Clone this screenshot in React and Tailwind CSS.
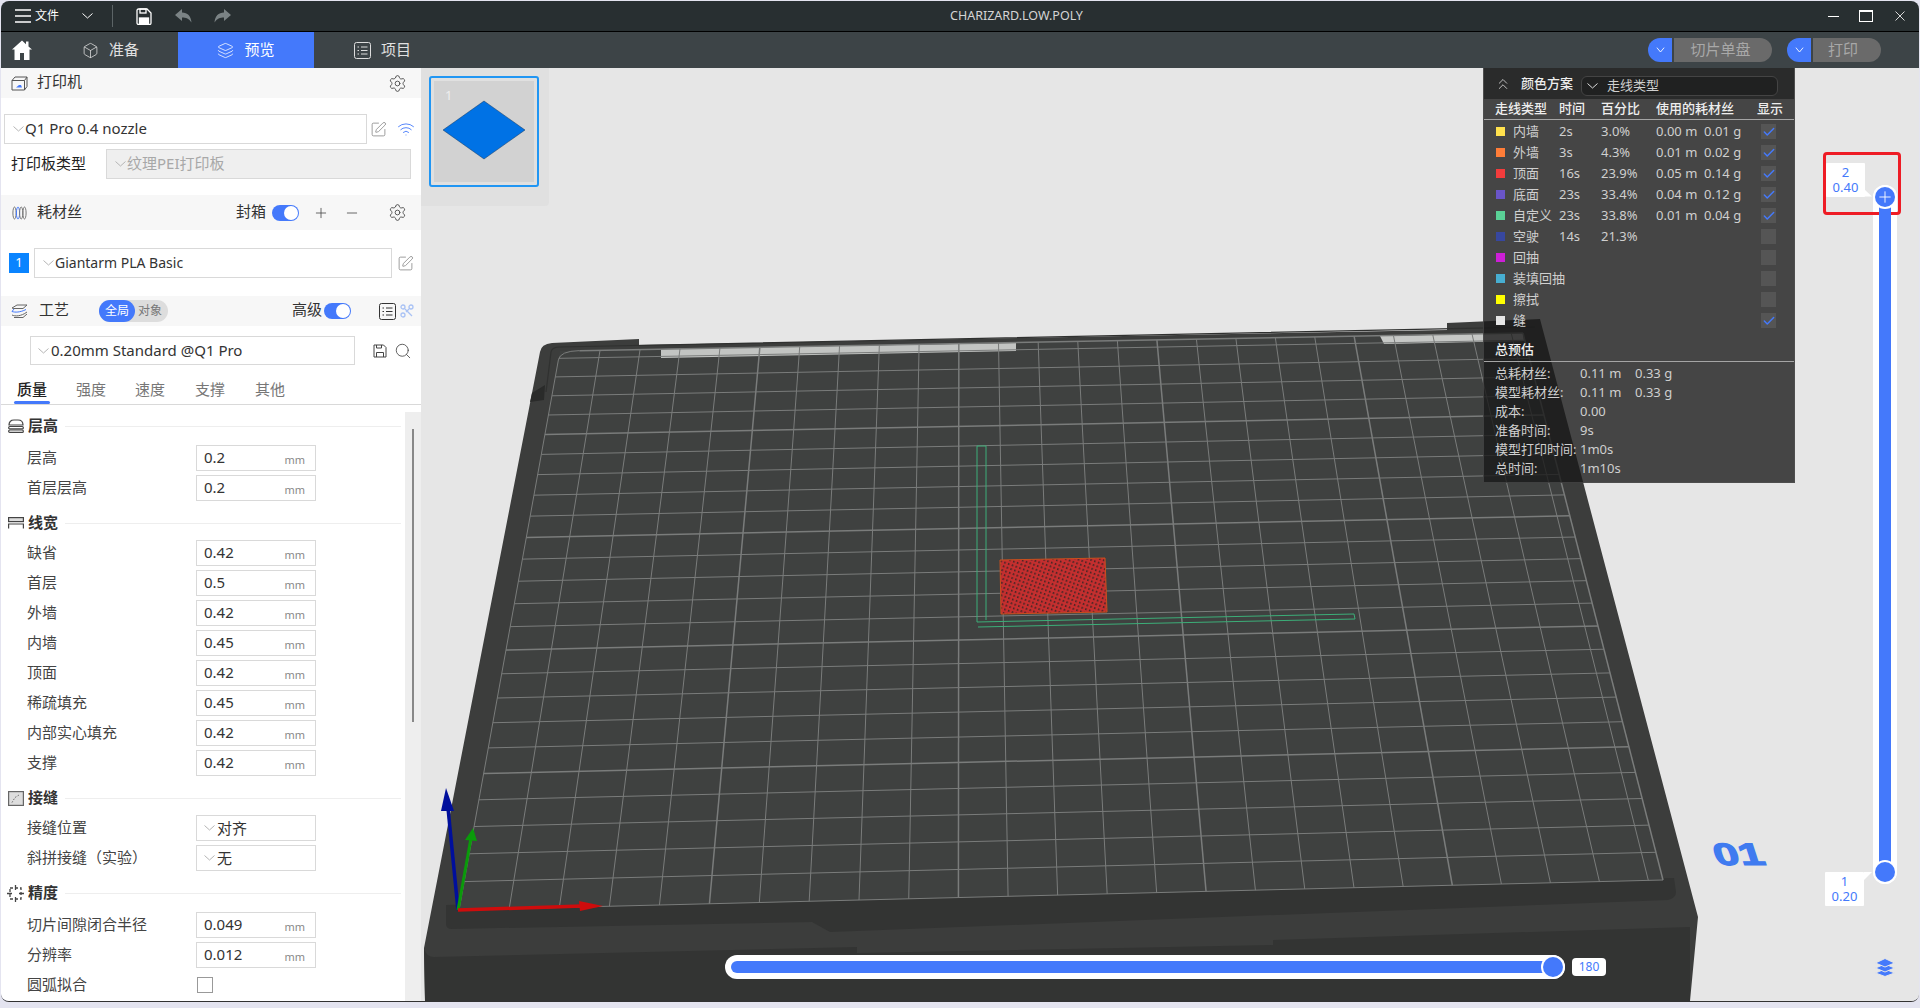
import React from 'react';
import { Check, Plus, Minus, Search, SquarePen, Wifi, Settings, Box, Layers, ChevronsUp } from 'lucide-react';

const BLUE = '#4479fb';

// --- small icons that the icon packages don't have ---
const Chevron = ({ className = '', color = '#b5b5b5' }) => (
  <svg width="11" height="6" viewBox="0 0 11 6" className={`shrink-0 ${className}`}>
    <polyline points="0.5,0.5 5.5,5 10.5,0.5" fill="none" stroke={color} strokeWidth="1" />
  </svg>
);

const Toggle = () => (
  <div className="w-[27px] h-[16px] rounded-full bg-[#4479fb] flex items-center justify-end pr-[1px]">
    <div className="w-[14px] h-[14px] rounded-full bg-white" />
  </div>
);

const Gear = () => <Settings size={19} strokeWidth={1.1} color="#444" />;
const Edit = () => <SquarePen size={17} strokeWidth={1} color="#777" />;

const ListIcon = ({ size = 17, color = '#333' }) => (
  <svg width={size} height={size} viewBox="0 0 17 17" fill="none" stroke={color} strokeWidth="1">
    <rect x="0.5" y="0.5" width="16" height="16" rx="2" />
    <path d="M3.5 5h1.5M3.5 8.5h1.5M3.5 12h1.5M7 5h6.5M7 8.5h6.5M7 12h6.5" />
  </svg>
);

const Select = ({ text, className = '', textClass = '-mt-[2px] text-[#333] text-[15px]', chevronMargin = 'ml-[8px]', gap = 'ml-[1px]', bg = 'bg-white' }) => (
  <div className={`flex items-center border border-[#d9d9d9] ${bg} ${className}`}>
    <Chevron className={chevronMargin} />
    <span className={`${gap} whitespace-nowrap ${textClass}`}>{text}</span>
  </div>
);

const PanelHeader = ({ icon, title, height = 'h-[30px]', titleClass = 'ml-[9px]', children }) => (
  <div className={`flex items-center bg-[#f7f7f7] ${height}`}>
    <div className="ml-[10px] w-[17px] flex justify-center">{icon}</div>
    <span className={`${titleClass} -mt-[3px] text-[15px] text-[#333] whitespace-nowrap`}>{title}</span>
    {children}
  </div>
);

const SectionTitle = ({ icon, title, className = 'mt-[5px]' }) => (
  <div className={`flex items-center h-[30px] ${className}`}>
    <div className="ml-[6px] w-[17px] flex justify-center">{icon}</div>
    <span className="ml-[4px] -mt-[2px] text-[15px] font-bold text-[#333]">{title}</span>
    <div className="ml-[7px] w-[336px] h-px bg-[#eeeeee]" />
  </div>
);

const NumRow = ({ label, value }) => (
  <div className="flex items-center h-[30px]">
    <span className="ml-[26px] w-[169px] -mt-[2px] text-[15px] text-[#444] whitespace-nowrap">{label}</span>
    <div className="w-[120px] h-[26px] border border-[#d9d9d9] flex items-center pl-[7px] pr-[10px] justify-between">
      <span className="-mt-[2px] text-[15px] text-[#333]">{value}</span>
      <span className="text-[11px] text-[#888] mt-[5px]">mm</span>
    </div>
  </div>
);

const SelectRow = ({ label, value }) => (
  <div className="flex items-center h-[30px]">
    <span className="ml-[26px] w-[169px] -mt-[2px] text-[15px] text-[#444] whitespace-nowrap">{label}</span>
    <Select text={value} className="w-[120px] h-[26px]" chevronMargin="ml-[7px]" gap="ml-[2px]" textClass="text-[#333] text-[15px]" />
  </div>
);

const LayerHeightIcon = () => (
  <svg width="16" height="14" viewBox="0 0 16 14" fill="none" stroke="#444" strokeWidth="1.2">
    <path d="M1 6c0-3 2-5 5-5h4c3 0 5 2 5 5z" />
    <rect x="0.7" y="7.5" width="14.6" height="2.4" rx="1" />
    <rect x="0.7" y="11" width="14.6" height="2.4" rx="1" />
  </svg>
);

const LineWidthIcon = () => (
  <svg width="16" height="12" viewBox="0 0 16 12" fill="none" stroke="#444" strokeWidth="1.2">
    <rect x="0.6" y="0.6" width="14.8" height="4" fill="#ddd" />
    <path d="M0.6 11.5V7h14.8v4.5" />
  </svg>
);

const SeamIcon = () => (
  <svg width="16" height="15" viewBox="0 0 16 15">
    <rect x="0.6" y="0.6" width="14.8" height="13.8" fill="#ddd" stroke="#666" strokeWidth="1.2" />
    <path d="M4 11.5 7 6.5 11 4" fill="none" stroke="#666" strokeDasharray="1.4 1.6" />
  </svg>
);

const PrecisionIcon = () => (
  <svg width="17" height="17" viewBox="0 0 17 17" fill="none" stroke="#444" strokeWidth="1.3">
    <rect x="3" y="3" width="11" height="11" strokeDasharray="3 2" />
    <path d="M8.5 0v5M8.5 12v5M0 8.5h5M12 8.5h5" />
  </svg>
);

const PrinterIcon = () => (
  <svg width="17" height="15" viewBox="0 0 17 15" fill="none" stroke="#555" strokeWidth="1">
    <path d="M1 4.5h12.5V14H1zM1 4.5 4 1h12v9.5L13.5 14M13.5 4.5 16 1" />
    <path d="M5 11.5h6l-1-2.5H8z" fill="#4479fb" stroke="none" />
  </svg>
);

const FilamentIcon = () => (
  <svg width="15" height="14" viewBox="0 0 15 14" fill="none" stroke="#777" strokeWidth="1">
    <ellipse cx="2.5" cy="7" rx="1.6" ry="6" />
    <ellipse cx="6" cy="7" rx="1.6" ry="6" stroke="#4479fb" />
    <ellipse cx="9.2" cy="7" rx="1.6" ry="6" />
    <ellipse cx="12.5" cy="7" rx="1.6" ry="6" />
  </svg>
);

const ProcessIcon = () => (
  <svg width="17" height="14" viewBox="0 0 17 14" fill="none" stroke="#666" strokeWidth="1">
    <path d="M1 4 6 1h10l-4 3.5H3z" />
    <path d="M1 7.5 3 5M1 7.5c3 1 8 1 14-2" stroke="#4479fb" />
    <path d="M1 11c3 1.5 9 1.500 15-3M3 13.500h9l4-3.500" />
  </svg>
);

const FloppyIcon = () => (
  <svg width="16" height="17" viewBox="0 0 16 17" fill="none" stroke="#fff" strokeWidth="1.3">
    <path d="M1 2.500A1.500 1.500 0 0 1 2.500 1H11l4 4v10a1.500 1.500 0 0 1-1.500 1.500h-11A1.500 1.500 0 0 1 1 15z" />
    <rect x="4" y="1" width="6" height="4" />
    <rect x="3.500" y="10" width="9" height="6.500" fill="#fff" />
  </svg>
);

const UndoIcon = ({ flip }) => (
  <svg width="17" height="14" viewBox="0 0 17 14" className={flip ? '-scale-x-100' : ''}>
    <path d="M7 0 0 6l7 6V8.500c4 0 7 1 9.500 5C16 7 12.500 3.500 7 3.500z" fill="#7b8385" />
  </svg>
);

const HomeIcon = () => (
  <svg width="20" height="20" viewBox="0 0 20 20" fill="#fff">
    <path d="M10 0.500 0 9.500h2.500V20H8v-7h4v7h5.500V9.500H20L16.500 6.500V1.500h-2.500v2.800z" />
  </svg>
);

const TabItem = ({ icon, label, className }) => (
  <div className={`flex items-center h-full ${className}`}>
    {icon}
    <span className="text-[15px] ml-[10px] -mt-[2px]">{label}</span>
  </div>
);

const SplitButton = ({ label, width, pad }) => (
  <div className="flex h-[24px]">
    <div className="w-[24px] rounded-l-full bg-[#4479fb] flex items-center justify-center">
      <Chevron color="#fff" className="scale-x-75" />
    </div>
    <div className={`ml-[2px] ${width} ${pad} rounded-r-full bg-[#6a6a6a] text-[#a8a8a8] text-[15px] flex items-center justify-center`}>
      <span className="-mt-[2px]">{label}</span>
    </div>
  </div>
);

// --- color scheme table ---
const LINE_TYPES = [
  { c: '#ffe14d', n: '内墙', t: '2s', p: '3.0%', m: '0.00 m', g: '0.01 g', on: true },
  { c: '#ff7d38', n: '外墙', t: '3s', p: '4.3%', m: '0.01 m', g: '0.02 g', on: true },
  { c: '#f23c3c', n: '顶面', t: '16s', p: '23.9%', m: '0.05 m', g: '0.14 g', on: true },
  { c: '#6a55c8', n: '底面', t: '23s', p: '33.4%', m: '0.04 m', g: '0.12 g', on: true },
  { c: '#5ad196', n: '自定义', t: '23s', p: '33.8%', m: '0.01 m', g: '0.04 g', on: true },
  { c: '#37479f', n: '空驶', t: '14s', p: '21.3%' },
  { c: '#cd1fd7', n: '回抽' },
  { c: '#47aed1', n: '装填回抽' },
  { c: '#ffff00', n: '擦拭' },
  { c: '#e6e6e6', n: '缝', on: true },
];

const SUMMARY = [
  ['总耗材丝:', '0.11 m', '0.33 g'],
  ['模型耗材丝:', '0.11 m', '0.33 g'],
  ['成本:', '0.00'],
  ['准备时间:', '9s'],
  ['模型打印时间:', '1m0s'],
  ['总时间:', '1m10s'],
];

const ColorPanel = () => (
  <div className="absolute left-[1062px] top-0 w-[312px] h-[415px] bg-[rgba(24,24,24,0.785)] text-[13px] text-[#cfcfcf] border-x border-b border-[#555]/60">
    <div className="h-[31px] bg-[#2a2b2b] flex items-center">
      <ChevronsUp size={18} strokeWidth={1.1} color="#ddd" className="ml-[10px]" />
      <span className="ml-[9px] w-[60px] text-[#eee] font-medium">颜色方案</span>
      <div className="w-[197px] h-[20px] mt-[5px] rounded-md bg-[#202121] border border-[#444] flex items-center">
        <Chevron color="#ddd" className="ml-[5px]" />
        <span className="ml-[9px]">走线类型</span>
      </div>
    </div>
    <div className="h-[21px] flex items-center text-[#eee] font-medium border-b border-[#a5a5a5]">
      <span className="ml-[11px] w-[64px]">走线类型</span>
      <span className="w-[42px]">时间</span>
      <span className="w-[55px]">百分比</span>
      <span className="w-[101px]">使用的耗材丝</span>
      <span>显示</span>
    </div>
    <div className="pt-px">
      {LINE_TYPES.map((r) => (
        <div key={r.n} className="h-[21px] flex items-center">
          <div className="ml-[12px] w-[9px] h-[9px] mr-[8px]" style={{ backgroundColor: r.c }} />
          <span className="w-[46px] whitespace-nowrap">{r.n}</span>
          <span className="w-[42px]">{r.t}</span>
          <span className="w-[55px]">{r.p}</span>
          <span className="w-[48px]">{r.m}</span>
          <span className="w-[57px]">{r.g}</span>
          <div className="w-[15px] h-[15px] bg-[#555] flex items-center justify-center">
            {r.on && <Check size={14} strokeWidth={2.5} color={BLUE} />}
          </div>
        </div>
      ))}
    </div>
    <div className="mt-[9px] h-[22px] flex items-center border-b border-[#a5a5a5] pl-[11px] pb-[2px] text-[#eee] font-medium">总预估</div>
    <div className="pt-[2px]">
      {SUMMARY.map((r) => (
        <div key={r[0]} className="h-[19px] flex items-center pl-[11px]">
          <span className="w-[85px] whitespace-nowrap">{r[0]}</span>
          <span className="w-[55px]">{r[1]}</span>
          <span>{r[2]}</span>
        </div>
      ))}
    </div>
  </div>
);

// --- print bed, drawn in window coordinates ---
const square = (u, v) => {
  const [x0, y0] = [459, 910];
  const [x1, y1] = [1663, 880];
  const [x2, y2] = [1523, 333];
  const [x3, y3] = [560, 351];
  const dx1 = x1 - x2, dx2 = x3 - x2, sx = x0 - x1 + x2 - x3;
  const dy1 = y1 - y2, dy2 = y3 - y2, sy = y0 - y1 + y2 - y3;
  const den = dx1 * dy2 - dx2 * dy1;
  const g = (sx * dy2 - dx2 * sy) / den;
  const h = (dx1 * sy - sx * dy1) / den;
  const w = g * u + h * v + 1;
  return [
    ((x1 - x0 + g * x1) * u + (x3 - x0 + h * x3) * v + x0) / w,
    ((y1 - y0 + g * y1) * u + (y3 - y0 + h * y3) * v + y0) / w,
  ];
};

const COLS = 24.3;
const ROWS = 24.4;
const LINE = '#7a7c7b';

const gridLines = () => {
  const out = [];
  for (let i = 0; i <= Math.ceil(COLS); i++) {
    const u = Math.min(i, COLS) / COLS;
    const a = square(u, 0);
    const b = square(u, i === 0 ? 0.98 : 1);
    out.push(<line key={`v${i}`} x1={a[0]} y1={a[1]} x2={b[0]} y2={b[1]} stroke={LINE} strokeWidth={i % 5 === 0 && i > 0 ? 1.5 : 1} />);
  }
  for (let j = 0; j <= Math.ceil(ROWS); j++) {
    const v = Math.min(j, ROWS) / ROWS;
    const a = square(j === Math.ceil(ROWS) ? 0.02 : 0, v);
    const b = square(1, v);
    out.push(<line key={`h${j}`} x1={a[0]} y1={a[1]} x2={b[0]} y2={b[1]} stroke={LINE} strokeWidth={j % 5 === 0 && j > 0 ? 1.5 : 1} />);
  }
  return out;
};

const BedDrawing = () => {
  const tl = square(0, 1);
  const tlA = square(0, 0.98);
  const tlB = square(0.02, 1);
  const quad = [square(0, 0), square(1, 0), square(1, 1), square(0, 1)].map((p) => p.join(',')).join(' ');
  return (
    <svg className="absolute inset-0 w-[1498px] h-[933px]" viewBox="421 68 1498 933">
      <defs>
        <pattern id="hatch" width="4" height="4" patternUnits="userSpaceOnUse" patternTransform="rotate(20)">
          <rect width="4" height="4" fill="#c42f2f" />
          <rect width="1.5" height="2" fill="#4a2626" />
        </pattern>
      </defs>
      {/* frame */}
      <path d="M552 343 639 339V345L1447 330V323L1540 319 1698 917 1690 1001H425L424 948 540 352Q541 344 552 343Z" fill="#3c3d3c" />
      <path d="M424 948Q426 957 434 957L857 947V953L1273 945V940L1690 927 1690 1001H425Z" fill="#333433" />
      <path d="M446 912V924Q446 929 452 929L812 922 830 932 1668 900Q1676 898 1676 892L1674 878 446 905Z" fill="#333433" />
      <polygon points="532,393 545,385 544,400 530,402" fill="#2a2b2a" />
      <path d="M546 392 551 352Q552 347 560 347L1535 327" stroke="#303130" strokeWidth="1.2" fill="none" />
      {/* plate */}
      <polygon points={quad} fill="#3f4140" />
      <polygon points="661,349 1016,343 1016,351 661,358" fill="#c2c4c2" />
      <polygon points="1380,336 1523,333 1524,341 1384,344" fill="#c6c8c6" />
      {gridLines()}
      <path d={`M${tlA[0]} ${tlA[1]}Q${tl[0]} ${tl[1]} ${tlB[0]} ${tlB[1]}`} stroke={LINE} fill="none" />
      {/* model */}
      <polyline points="986,620 986,446 977,446 977,622 1354,614 1355,619 978,627" fill="none" stroke="#3cae78" strokeWidth="1" />
      <polygon points="1000,560 1105,558 1107,612 1001,614" fill="url(#hatch)" stroke="#c8501e" strokeWidth="1" />
      {/* axes */}
      <line x1="458" y1="910" x2="448" y2="808" stroke="#000f9c" strokeWidth="3.5" />
      <polygon points="446,788 441,811 454,811" fill="#000f9c" />
      <line x1="458" y1="910" x2="471" y2="838" stroke="#0a9a0a" strokeWidth="3" />
      <polygon points="473,828 465,840 477,841" fill="#0a9a0a" />
      <line x1="458" y1="910" x2="582" y2="906" stroke="#cf0c0c" strokeWidth="3.5" />
      <polygon points="603,906 579,901 580,911" fill="#cf0c0c" />
      {/* bed logo, seen in perspective */}
      <text
        transform="translate(1717 865) skewX(18) scale(1.45 1)"
        fontFamily="Liberation Sans"
        fontWeight="700"
        fontSize="31"
        fill="#3f7bf0"
        stroke="#3f7bf0"
        strokeWidth="1.2"
      >
        01
      </text>
    </svg>
  );
};

const LayersIcon = () => (
  <svg width="20" height="19" viewBox="0 0 20 19" fill={BLUE} stroke="#e6e6e6" strokeWidth="1">
    <path d="M10 11 0.500 15 10 18.500 19.500 15z" />
    <path d="M10 6 0.500 10 10 14 19.500 10z" />
    <path d="M10 0.500 0.500 5 10 9 19.500 5z" />
  </svg>
);

const SliderLabel = ({ className, top, bottom }) => (
  <div className={`absolute w-[39px] h-[34px] bg-white text-[#4479fb] text-[13px] leading-[15px] flex flex-col items-center justify-center rounded-[1px] ${className}`}>
    <span>{top}</span>
    <span>{bottom}</span>
  </div>
);

const Canvas = () => (
  <div className="relative flex-1 bg-[#e6e6e6] overflow-hidden">
    <BedDrawing />

    {/* plate thumbnail */}
    <div className="absolute left-0 top-0 w-[128px] h-[138px] bg-[#e0e0e0] rounded-br-sm pt-[8px] pl-[8px]">
      <div className="relative w-[110px] h-[111px] border-2 border-[#2196f3] rounded-[3px] p-[3px]">
        <div className="relative w-full h-full bg-[#d2d2d2]">
          <span className="absolute left-[11px] top-[5px] text-[13px] text-[#eeeeee]">1</span>
          <svg width="84" height="60" viewBox="0 0 84 60" className="absolute left-[8px] top-[19px]">
            <polygon points="42,1 83,30 42,59 1,30" fill="#0072e5" stroke="#10365e" strokeWidth="0.5" />
          </svg>
        </div>
      </div>
    </div>

    <ColorPanel />

    {/* layer slider: white track, then the annotation box, then the blue fill over it */}
    <div className="absolute left-[1452px] top-[117px] w-[24px] h-[699px] rounded-full bg-white" />
    <div className="absolute left-[1402px] top-[84px] w-[78px] h-[63px] border-[3px] border-[#ee1c25] rounded-[4px]" />
    <div className="absolute left-[1458px] top-[123px] w-[12px] h-[687px] bg-[#4479fb]" />
    <div className="absolute left-[1452px] top-[117px] w-[24px] h-[24px] rounded-full bg-white flex items-center justify-center">
      <div className="w-[20px] h-[20px] rounded-full bg-[#4479fb] flex items-center justify-center">
        <Plus size={18} strokeWidth={1.2} color="#fff" />
      </div>
    </div>
    <div className="absolute left-[1452px] top-[792px] w-[24px] h-[24px] rounded-full bg-white flex items-center justify-center">
      <div className="w-[20px] h-[20px] rounded-full bg-[#4479fb]" />
    </div>
    <SliderLabel className="left-[1405px] top-[95px]" top="2" bottom="0.40" />
    <svg width="9" height="8" className="absolute left-[1443px] top-[121px]"><polygon points="0,0 8,7.500 0,7.500" fill="#fff" /></svg>
    <SliderLabel className="left-[1404px] top-[804px]" top="1" bottom="0.20" />
    <svg width="9" height="8" className="absolute left-[1443px] top-[804px]"><polygon points="0,0 8,0 0,8" fill="#fff" /></svg>

    {/* move slider */}
    <div className="absolute left-[304px] top-[887px] w-[840px] h-[24px] rounded-full bg-white p-[6px]">
      <div className="w-full h-full rounded-l-full bg-[#4479fb]" />
    </div>
    <div className="absolute left-[1120px] top-[887px] w-[24px] h-[24px] rounded-full bg-white flex items-center justify-center">
      <div className="w-[20px] h-[20px] rounded-full bg-[#4479fb]" />
    </div>
    <div className="absolute left-[1151px] top-[890px] w-[34px] h-[18px] rounded-sm bg-white text-[#4479fb] text-[12px] flex items-center justify-center">180</div>

    <div className="absolute left-[1454px] top-[890px]">
      <LayersIcon />
    </div>
  </div>
);

const SidePanel = () => (
  <div className="w-[420px] h-full bg-white flex flex-col shrink-0 rounded-bl-lg overflow-hidden">
    <PanelHeader icon={<PrinterIcon />} title="打印机">
      <div className="ml-auto mr-[14px]"><Gear /></div>
    </PanelHeader>
    <div className="pt-[16px] pb-[16px] h-[97px]">
      <div className="flex items-center pl-[3px]">
        <Select text="Q1 Pro 0.4 nozzle" className="w-[363px] h-[30px]" />
        <div className="ml-[3px]"><Edit /></div>
        <Wifi size={18} strokeWidth={1.2} color={BLUE} className="ml-[10px]" />
      </div>
      <div className="flex items-center pl-[10px] mt-[5px]">
        <span className="w-[95px] -mt-[2px] text-[15px] text-[#222]">打印板类型</span>
        <Select text="纹理PEI打印板" className="w-[305px] h-[30px]" bg="bg-[#efefef]" textClass="-mt-[2px] text-[#a8a8a8] text-[15px]" />
      </div>
    </div>

    <PanelHeader icon={<FilamentIcon />} title="耗材丝" height="h-[35px]">
      <span className="ml-[154px] -mt-[3px] text-[15px] text-[#333]">封箱</span>
      <div className="ml-[6px]"><Toggle /></div>
      <Plus size={16} strokeWidth={1.2} color="#444" className="ml-[14px]" />
      <Minus size={16} strokeWidth={1.2} color="#444" className="ml-[15px]" />
      <div className="ml-auto mr-[14px]"><Gear /></div>
    </PanelHeader>
    <div className="h-[66px] flex items-center pl-[8px]">
      <div className="w-[20px] h-[20px] bg-[#0a84ff] text-white text-[13px] flex items-center justify-center">1</div>
      <Select text="Giantarm PLA Basic" className="ml-[5px] w-[358px] h-[30px]" textClass="-mt-[2px] text-[#333] text-[14px]" />
      <div className="ml-[5px]"><Edit /></div>
    </div>

    <PanelHeader icon={<ProcessIcon />} title="工艺" titleClass="ml-[11px]">
      <div className="ml-[30px] w-[69px] h-[22px] rounded-full bg-[#dddddd] flex items-center text-[12px]">
        <div className="w-[36px] h-full rounded-full bg-[#4479fb] text-white flex items-center justify-center">全局</div>
        <span className="ml-[3px] text-[#777]">对象</span>
      </div>
      <span className="ml-[124px] -mt-[3px] text-[15px] text-[#333]">高级</span>
      <div className="ml-[2px]"><Toggle /></div>
      <div className="ml-[28px]"><ListIcon /></div>
      <svg width="14" height="14" viewBox="0 0 14 14" fill="none" stroke="#a9c2f5" strokeWidth="1.3" className="ml-[4px]">
        <circle cx="3" cy="3" r="2" />
        <circle cx="11" cy="3" r="2" />
        <circle cx="3" cy="11" r="2" />
        <path d="M5 5l7 7M9 5 6 8" />
      </svg>
    </PanelHeader>
    <div className="flex items-center pt-[10px] pl-[29px]">
      <Select text="0.20mm Standard @Q1 Pro" className="w-[325px] h-[29px]" chevronMargin="ml-[7px]" gap="ml-[2px]" textClass="text-[#333] text-[15px]" />
      <svg width="14" height="14" viewBox="0 0 14 14" fill="none" stroke="#444" strokeWidth="1" className="ml-[18px]">
        <path d="M1 1h9.500L13 3.500V13H1z" />
        <path d="M3.500 1v3h5V1M3.500 13V8.500h7V13" />
      </svg>
      <Search size={18} strokeWidth={1.1} color="#444" className="ml-[7px]" />
    </div>

    <div className="flex h-[40px] items-end border-b border-[#d9d9d9] text-[15px] text-[#777] pl-[13px] shrink-0">
      <div className="flex flex-col items-center w-[36px] text-[#222] font-medium">
        <span>质量</span>
        <div className="w-full h-[3px] rounded-full bg-[#4479fb] mt-px" />
      </div>
      <span className="ml-[26px] mb-[4px]">强度</span>
      <span className="ml-[29px] mb-[4px]">速度</span>
      <span className="ml-[30px] mb-[4px]">支撑</span>
      <span className="ml-[30px] mb-[4px]">其他</span>
    </div>

    <div className="relative flex-1 overflow-hidden">
      <SectionTitle icon={<LayerHeightIcon />} title="层高" className="mt-[6px]" />
      <div className="mt-[2px]">
        <NumRow label="层高" value="0.2" />
        <NumRow label="首层层高" value="0.2" />
      </div>
      <SectionTitle icon={<LineWidthIcon />} title="线宽" />
      <NumRow label="缺省" value="0.42" />
      <NumRow label="首层" value="0.5" />
      <NumRow label="外墙" value="0.42" />
      <NumRow label="内墙" value="0.45" />
      <NumRow label="顶面" value="0.42" />
      <NumRow label="稀疏填充" value="0.45" />
      <NumRow label="内部实心填充" value="0.42" />
      <NumRow label="支撑" value="0.42" />
      <SectionTitle icon={<SeamIcon />} title="接缝" />
      <SelectRow label="接缝位置" value="对齐" />
      <SelectRow label="斜拼接缝（实验）" value="无" />
      <SectionTitle icon={<PrecisionIcon />} title="精度" />
      <div className="mt-[2px]">
        <NumRow label="切片间隙闭合半径" value="0.049" />
        <NumRow label="分辨率" value="0.012" />
        <div className="flex items-center h-[30px]">
          <span className="ml-[26px] w-[170px] -mt-[2px] text-[15px] text-[#444]">圆弧拟合</span>
          <div className="w-[16px] h-[16px] border border-[#999]" />
        </div>
      </div>

      {/* scrollbar */}
      <div className="absolute right-0 top-[7px] bottom-0 w-[16px] bg-[#eeeeee]">
        <div className="ml-[7px] mt-[17px] w-[2px] h-[293px] bg-[#888]" />
      </div>
    </div>
  </div>
);

export default function App() {
  return (
    <div className="w-screen h-screen overflow-hidden bg-[#e4e4f0] pt-px pl-px pr-px pb-[6px] font-['Noto_Sans','Noto_Sans_CJK_SC',sans-serif]">
      <div className="w-full h-full flex flex-col rounded-t-lg rounded-b-lg overflow-hidden border-b border-[#333]">
        {/* title bar */}
        <div className="relative h-[31px] bg-[#282f31] border-b border-black flex items-center shrink-0 text-white">
          <svg width="16" height="14" viewBox="0 0 16 14" stroke="#fff" strokeWidth="1.4" className="ml-[14px]">
            <path d="M0 1h16M0 7h16M0 13h16" />
          </svg>
          <span className="ml-[4px] text-[12px]">文件</span>
          <Chevron color="#fff" className="ml-[23px]" />
          <div className="ml-[19px] w-px h-[22px] bg-[#5c6466]" />
          <div className="ml-[23px]"><FloppyIcon /></div>
          <div className="ml-[23px]"><UndoIcon /></div>
          <div className="ml-[22px]"><UndoIcon flip /></div>
          <span className="absolute left-[949px] top-[7px] text-[12.500px] leading-[16px] text-[#d5d5d5]">CHARIZARD.LOW.POLY</span>
          <div className="ml-auto flex items-center">
            <div className="w-[11px] h-px bg-white" />
            <div className="ml-[20px] w-[14px] h-[12px] border border-white border-t-2" />
            <svg width="10" height="10" viewBox="0 0 10 10" stroke="#d8d8d8" strokeWidth="1" className="ml-[22px] mr-[14px]">
              <path d="M0.500 0.500l9 9M9.500 0.500l-9 9" />
            </svg>
          </div>
        </div>

        {/* tab bar */}
        <div className="h-[36px] bg-[#3d4447] flex items-center shrink-0 text-white relative">
          <div className="ml-[11px]"><HomeIcon /></div>
          <TabItem
            className="ml-[50px] w-[96px] text-[#e0e0e0]"
            icon={<Box size={17} strokeWidth={1.1} color="#ddd" />}
            label="准备"
          />
          <TabItem
            className="w-[136px] bg-[#4479fb] justify-center"
            icon={<Layers size={17} strokeWidth={1.1} color="#fff" />}
            label="预览"
          />
          <TabItem
            className="ml-[40px] text-[#e0e0e0]"
            icon={<ListIcon color="#ddd" />}
            label="项目"
          />
          <div className="ml-auto flex items-center mr-[38px]">
            <SplitButton label="切片单盘" width="w-[98px]" pad="pr-[5px]" />
            <div className="w-[15px]" />
            <SplitButton label="打印" width="w-[68px]" pad="pr-[8px]" />
          </div>
        </div>

        <div className="flex-1 flex min-h-0">
          <SidePanel />
          <Canvas />
        </div>
      </div>
    </div>
  );
}
